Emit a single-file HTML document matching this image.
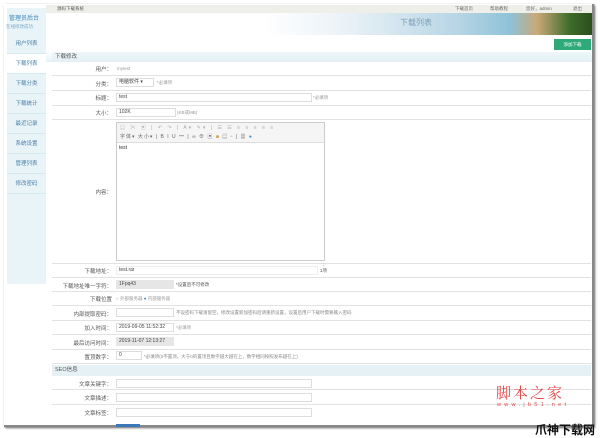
<!DOCTYPE html>
<html><head><meta charset="utf-8"><style>
*{margin:0;padding:0;box-sizing:border-box}
body{width:600px;height:434px;background:#fff;position:relative;overflow:hidden;font-family:"Liberation Sans","Noto Sans CJK SC",sans-serif;font-size:5px;color:#555}
.a{position:absolute;white-space:nowrap}
.frame{position:absolute;left:4px;top:4px;width:590px;height:423px;background:#fff;box-shadow:1px 1px 2px #666;border-right:2px solid #888;border-bottom:2px solid #888}
.side{position:absolute;left:7px;top:8px;width:39px;height:276px;background:#e9f4f9}
.si{position:absolute;left:7px;width:39px;height:20px;line-height:20px;text-align:center;color:#4a7fa8;font-size:5.5px;border-bottom:1px solid #d6e8f0}
.row{position:absolute;left:52px;width:539px;border-bottom:1px solid #e2e2e2}
.lab{position:absolute;right:488px;text-align:right;color:#555;font-size:5.5px}
.inp{position:absolute;left:116px;height:9px;border:1px solid #ddd;background:#fff;font-size:5px;line-height:7px;padding-left:2px;color:#444}
.hdr{position:absolute;left:52px;width:539px;background:linear-gradient(#eef6f9,#e4f0f5);font-size:5.5px;color:#555;padding-left:3px}
</style></head><body>
<div class="frame"></div>
<div class="a" style="left:46px;top:5px;width:546px;height:8px;background:#efefea"></div>
<div class="a" style="left:57px;top:6px;font-size:4.5px;color:#555">源码下载系统</div>
<div class="a" style="left:455px;top:6px;font-size:4.5px;color:#666">下载首页</div>
<div class="a" style="left:490px;top:6px;font-size:4.5px;color:#666">帮助教程</div>
<div class="a" style="left:526px;top:6px;font-size:4.5px;color:#666">您好，admin</div>
<div class="a" style="left:573px;top:6px;font-size:4.5px;color:#666">退出</div>
<div class="a" style="left:46px;top:13px;width:546px;height:22px;background:linear-gradient(90deg,#fff 0%,#fff 40%,#eaf2f7 55%,#b9d6e6 75%,#8ec2d8 85%,#c9a877 90%,#3c6b2a 96%,#2c4e1e 100%)"></div>
<div class="a" style="left:400px;top:17px;font-size:8px;color:#7b9fb8">下载列表</div>
<div class="a" style="left:46px;top:35px;width:546px;height:27px;background:linear-gradient(#fff 55%,#e7f2f5)"></div>
<div class="a" style="left:554px;top:39px;width:37px;height:11px;background:#2eaa78;color:#fff;font-size:4.5px;line-height:11px;text-align:center">添加下载</div>
<div class="side"></div>
<div class="a" style="left:9px;top:13px;font-size:6px;color:#3b86b8">管理员后台</div>
<div class="a" style="left:6px;top:24px;font-size:4.5px;color:#7aa8c8">在线修改成功</div>
<div class="si" style="top:34px">用户列表</div>
<div class="si" style="top:54px;background:#fff">下载列表</div>
<div class="si" style="top:74px">下载分类</div>
<div class="si" style="top:94px">下载统计</div>
<div class="si" style="top:114px">最近记录</div>
<div class="si" style="top:134px">系统设置</div>
<div class="si" style="top:154px">管理列表</div>
<div class="si" style="top:174px">修改密码</div>

<div class="hdr" style="top:52px;height:10px;line-height:10px">下载修改</div>
<div class="row" style="top:62px;height:14px"></div><div class="lab" style="top:65px">用户：</div><div class="a" style="left:117px;top:66px;color:#999;font-size:4.5px">mytest</div>
<div class="row" style="top:76px;height:15px"></div><div class="lab" style="top:80px">分类：</div><div class="inp" style="top:78px;width:38px">电脑软件 ▾</div><div class="a" style="left:157px;top:80px;color:#999;font-size:4.5px">*必填项</div>
<div class="row" style="top:91px;height:15px"></div><div class="lab" style="top:94px">标题：</div><div class="inp" style="top:93px;width:196px">test</div><div class="a" style="left:313px;top:95px;color:#999;font-size:4.5px">*必填项</div>
<div class="row" style="top:106px;height:14px"></div><div class="lab" style="top:109px">大小：</div><div class="inp" style="top:108px;width:60px">102K</div><div class="a" style="left:177px;top:110px;color:#999;font-size:4.5px">(KB或MB)</div>
<div class="row" style="top:120px;height:144px"></div><div class="lab" style="top:188px">内容：</div>
<div class="a" style="left:116px;top:122px;width:209px;height:139px;border:1px solid #ccc;background:#fff"></div>
<div class="a" style="left:117px;top:123px;width:207px;height:20px;background:#f5f5f5;border-bottom:1px solid #ddd"></div>
<div class="a" style="left:120px;top:124px;font-size:5px;color:#aaa;letter-spacing:2px">▤ ✂ ▣ | ↶ ↷ | A▾ ✎▾ | ☰ ☰ ≡ ≡ ≡ ≡ ≡</div>
<div class="a" style="left:120px;top:133px;font-size:5px;color:#666;letter-spacing:1px">字体▾ 大小▾ | B I U ━ | ∞ ⊕ ▣ <span style="color:#c93">■</span> ▤ ▫ | ▦ <span style="color:#48c">●</span></div>
<div class="a" style="left:119px;top:145px;font-size:5px;color:#333">test</div>
<div class="a" style="left:323px;top:262px;font-size:4px;color:#666">⁞</div>
<div class="row" style="top:264px;height:14px"></div><div class="lab" style="top:267px">下载地址：</div><div class="inp" style="top:266px;width:202px;border-color:#eee">test.rar</div><div class="a" style="left:320px;top:268px;font-size:4.5px">1项</div>
<div class="row" style="top:278px;height:14px"></div><div class="lab" style="top:282px">下载地址唯一字符：</div><div class="inp" style="top:280px;width:58px;background:#e6e6e6;border-color:#e6e6e6">1Fpq43</div><div class="a" style="left:176px;top:282px;font-size:4.5px">*设置后不可修改</div>
<div class="row" style="top:292px;height:14px"></div><div class="lab" style="top:295px">下载位置</div><div class="a" style="left:116px;top:296px;font-size:4.5px;color:#999">○ 外部服务器 <span style="color:#3b86c8">●</span> 内部服务器</div>
<div class="row" style="top:306px;height:15px"></div><div class="lab" style="top:310px">内部提取密码：</div><div class="inp" style="top:308px;width:58px"></div><div class="a" style="left:176px;top:310px;font-size:4.5px;color:#888">不设密码下载请留空，修改设置新加密码后请重新设置，设置后用户下载时需要输入密码</div>
<div class="row" style="top:321px;height:14px"></div><div class="lab" style="top:324px">加入时间：</div><div class="inp" style="top:323px;width:58px">2019-09-05 11:52:32</div><div class="a" style="left:176px;top:325px;font-size:4.5px;color:#999">*必填项</div>
<div class="row" style="top:335px;height:15px"></div><div class="lab" style="top:339px">最后访问时间：</div><div class="inp" style="top:337px;width:58px;background:#e6e6e6;border-color:#e6e6e6">2019-11-07 12:13:27</div>
<div class="row" style="top:350px;height:14px"></div><div class="lab" style="top:353px">置顶数字：</div><div class="inp" style="top:351px;width:26px">0</div><div class="a" style="left:144px;top:354px;font-size:4.5px;color:#888">*必填项(0不置顶，大于0的置顶且数字越大越在上，数字相同按照发布越在上)</div>
<div class="hdr" style="top:365px;height:11px;line-height:11px;background:#e6f1f6">SEO信息</div>
<div class="row" style="top:376px;height:14px"></div><div class="lab" style="top:380px">文章关键字：</div><div class="inp" style="top:379px;width:196px"></div>
<div class="row" style="top:390px;height:15px"></div><div class="lab" style="top:394px">文章描述：</div><div class="inp" style="top:393px;width:196px"></div>
<div class="row" style="top:405px;height:14px;border:none"></div><div class="lab" style="top:409px">文章标签：</div><div class="inp" style="top:408px;width:196px"></div>
<div class="a" style="left:116px;top:424px;width:24px;height:3px;background:#3a78b8"></div>
<div class="a" style="left:496px;top:382px;font-size:15px;color:#e0484a;letter-spacing:2px;font-family:'Noto Serif CJK SC',serif">脚本之家</div>
<div class="a" style="left:497px;top:402px;font-size:5.5px;color:#e0484a;letter-spacing:3.3px">www.jb51.net</div>
<div class="a" style="left:535px;top:421px;font-size:12px;font-weight:bold;color:#111">爪神下载网</div>
</body></html>
